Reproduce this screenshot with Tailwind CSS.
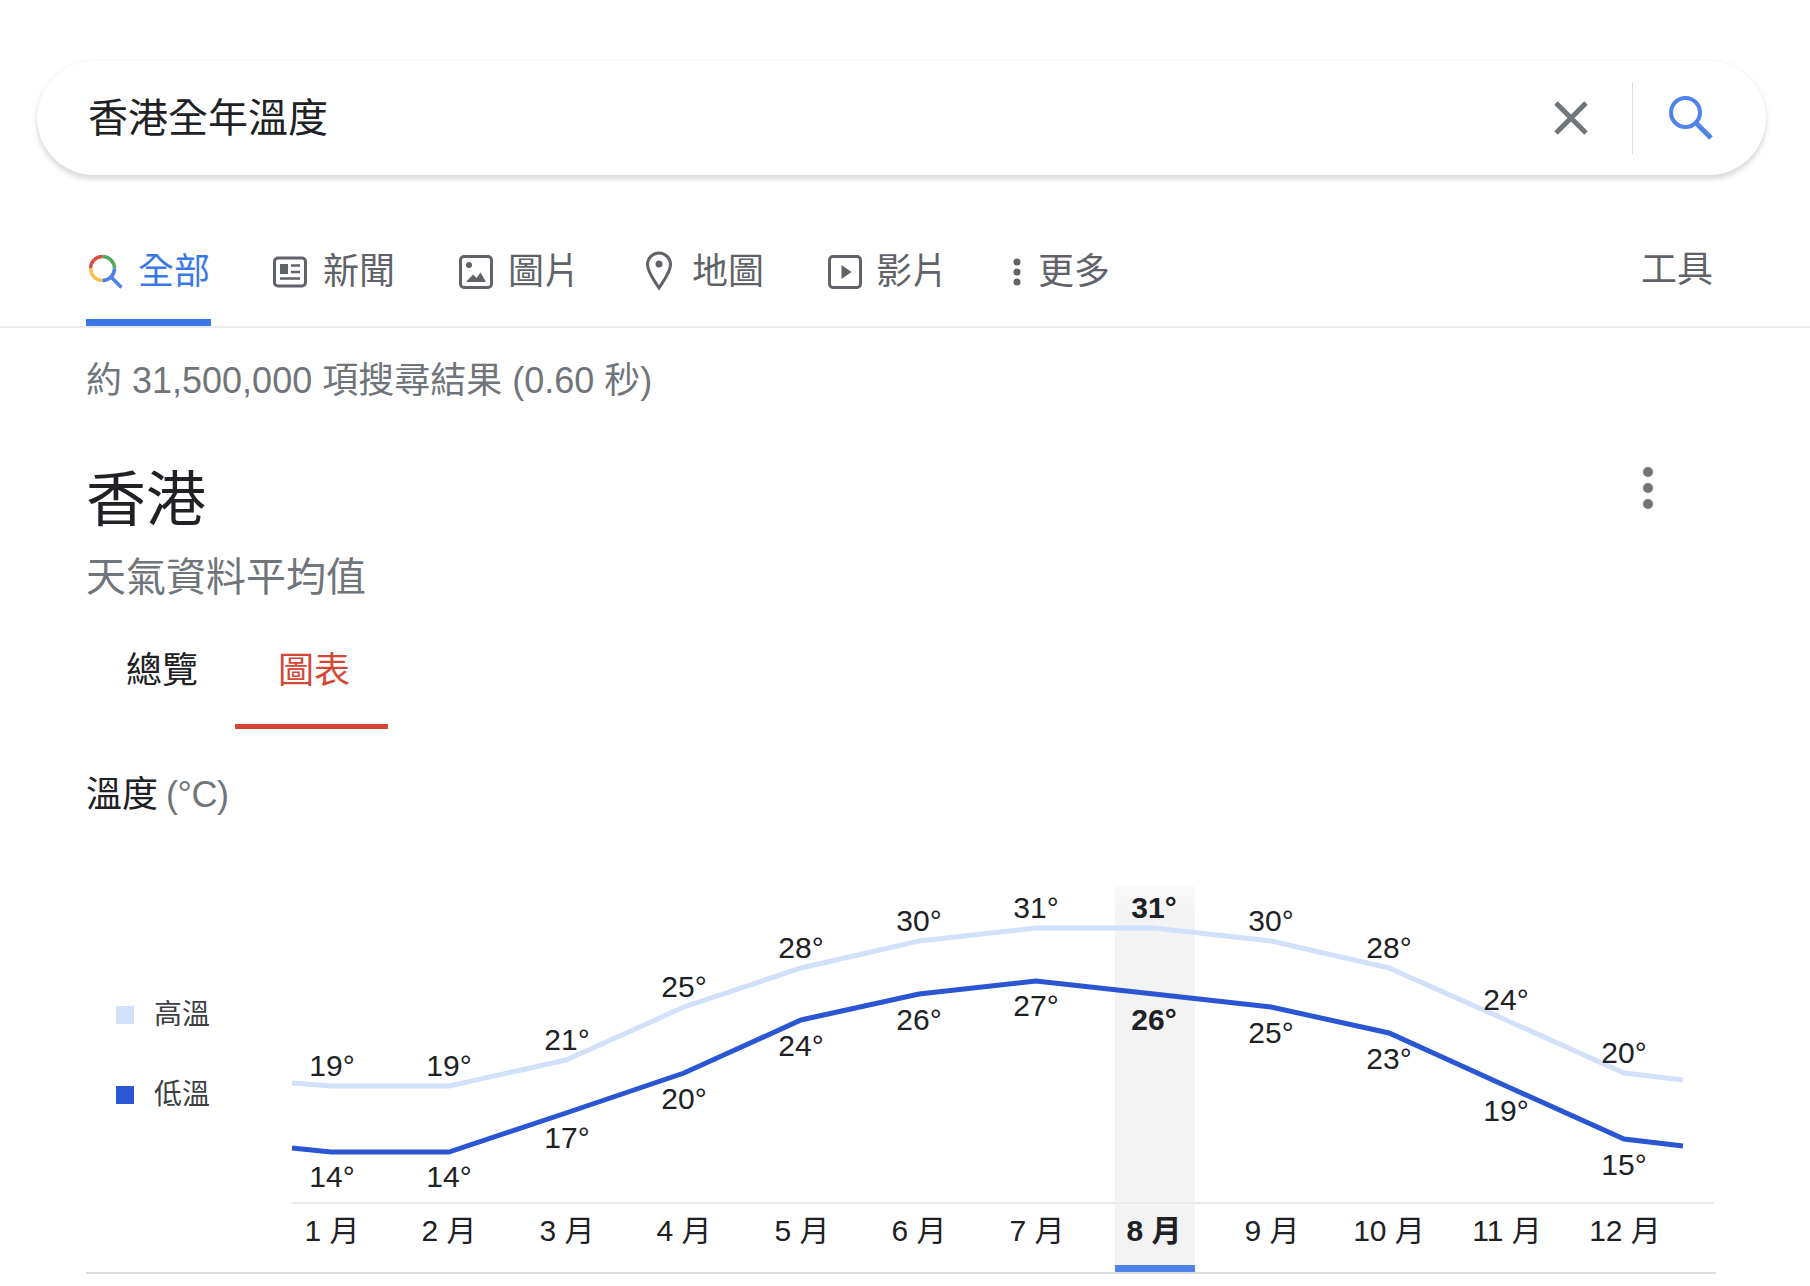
<!DOCTYPE html>
<html lang="zh-Hant"><head><meta charset="utf-8">
<script src="https://cdn.jsdelivr.net/npm/@tailwindcss/browser@4"></script>
</head>
<body class="bg-white font-['Liberation_Sans','Noto_Sans_CJK_TC',sans-serif] overflow-hidden">
<div class="w-[1810px] h-[1286px] overflow-hidden">
  <div class="pt-[61px] pl-[37px] pr-[44px]">
    <div class="h-[114px] rounded-[57px] bg-white shadow-[0_5px_4px_rgba(0,0,0,0.09),0_3px_10px_rgba(0,0,0,0.06),0_0_3px_rgba(0,0,0,0.05)] flex items-center pl-[51px] pr-[53px]">
      <div class="flex-1 text-[40px] leading-[92px] text-[#202124]">香港全年溫度</div>
      <svg class="w-[60px] h-[60px] mr-[31px]" viewBox="0 0 60 60"><path d="M15 15 45 45M45 15 15 45" stroke="#70757a" stroke-width="5" fill="none"/></svg>
      <div class="w-px h-[72px] bg-[#dadce0] mr-[36px]"></div>
      <svg class="w-[44px] h-[44px]" viewBox="0 0 44 44"><circle cx="16.500" cy="16.500" r="14.500" fill="none" stroke="#5083e8" stroke-width="4"/><path d="M27 27 42 42" stroke="#5083e8" stroke-width="5" fill="none"/></svg>
    </div>
  </div>

  <div class="mt-[63px] h-[90px] border-b-2 border-[#e8eaed] flex items-start pl-[86px] pr-[97px] text-[36px] leading-[68px] text-[#5f6368]">
    <div class="relative h-[88px] w-[125px] flex text-[#3b78e7] gap-[17px] pl-[3px]">
      <svg class="w-[34px] h-[36px] mt-[16px] -mr-[2px] shrink-0" viewBox="0 0 34 36" fill="none" stroke-width="3.500"><path d="M1.500 14.500A12 12 0 0 1 13.500 2.500" stroke="#d9503f"/><path d="M13.500 2.500A12 12 0 0 1 25.500 14.500" stroke="#54a85a"/><path d="M1.500 14.500A12 12 0 0 0 13.500 26.500" stroke="#f4c14c"/><path d="M13.500 26.500A12 12 0 0 0 25.500 14.500" stroke="#4c80e6"/><path d="M21.500 22.500 32.500 33.500" stroke="#4c80e6"/></svg>
      <span class="whitespace-nowrap">全部</span>
      <div class="absolute left-0 right-0 bottom-0 h-[7px] bg-[#3b78e7]"></div>
    </div>
    <svg class="w-[34px] h-[32px] mt-[18px] ml-[62px]" viewBox="0 0 34 32" fill="none"><rect x="1.500" y="2" width="31" height="28" rx="3.500" stroke="#5f6368" stroke-width="3"/><rect x="7" y="8" width="8" height="10" fill="#5f6368"/><path d="M18 9.500h9M18 16h9M7 22.500h20" stroke="#5f6368" stroke-width="2.500"/></svg>
    <span class="ml-[16px]">新聞</span>
    <svg class="w-[34px] h-[34px] mt-[17px] ml-[64px]" viewBox="0 0 34 34" fill="none"><rect x="1.500" y="1.500" width="31" height="31" rx="3.500" stroke="#5f6368" stroke-width="3"/><circle cx="10" cy="10" r="3" fill="#5f6368"/><path d="M7 27 14 19.500 17.500 23 21.500 17.500 27 27z" fill="#5f6368"/></svg>
    <span class="ml-[15px]">圖片</span>
    <svg class="w-[28px] h-[40px] mt-[13px] ml-[65px]" viewBox="0 0 28 40" fill="none"><path d="M14 37C9 29 2.500 21 2.500 13.500a11.500 11.500 0 0 1 23 0C25.500 21 19 29 14 37z" stroke="#5f6368" stroke-width="3"/><circle cx="14" cy="13" r="3.500" fill="#5f6368"/></svg>
    <span class="ml-[19px]">地圖</span>
    <svg class="w-[34px] h-[34px] mt-[17px] ml-[64px]" viewBox="0 0 34 34" fill="none"><rect x="1.500" y="1.500" width="31" height="31" rx="3.500" stroke="#5f6368" stroke-width="3"/><path d="M13.500 10 23.500 17 13.500 24z" fill="#5f6368"/></svg>
    <span class="ml-[14px]">影片</span>
    <svg class="w-[10px] h-[30px] mt-[19px] ml-[64px]" viewBox="0 0 10 30"><circle cx="5" cy="5" r="3.500" fill="#5f6368"/><circle cx="5" cy="15" r="3.500" fill="#5f6368"/><circle cx="5" cy="25" r="3.500" fill="#5f6368"/></svg>
    <span class="ml-[16px]">更多</span>
    <span class="ml-auto -mt-[2px]">工具</span>
  </div>

  <div class="pl-[86px] pr-[94px]">
    <div class="mt-[28px] text-[36px] leading-[50px] text-[#70757a]">約 31,500,000 項搜尋結果 (0.60 秒)</div>

    <div class="relative mt-[53px]">
      <div class="text-[60px] leading-[84px] text-[#202124]">香港</div>
      <svg class="absolute right-[62px] top-[7px] w-[12px] h-[44px]" viewBox="0 0 12 44"><circle cx="6" cy="6" r="5" fill="#70757a"/><circle cx="6" cy="22" r="5" fill="#70757a"/><circle cx="6" cy="38" r="5" fill="#70757a"/></svg>
    </div>
    <div class="mt-[6px] text-[40px] leading-[56px] text-[#70757a]">天氣資料平均值</div>

    <div class="mt-[35px] flex text-[36px] leading-[62px]">
      <div class="w-[149px] pl-[40px] h-[89px] text-[#202124]">總覽</div>
      <div class="w-[153px] h-[89px] pl-[43px] border-b-[5px] border-[#d14836] text-[#d14836]">圖表</div>
    </div>

    <div class="mt-[41px] text-[36px] leading-[50px] text-[#70757a]"><span class="text-[#202124]">溫度</span> <span class="-ml-[2px] tracking-[-0.5px]">(°C)</span></div>
  </div>

  <div class="relative mt-[29px] mx-[86px] w-[1630px] h-[425px] border-b-2 border-[#dadce0]">
    <div class="flex items-center absolute left-[30px] top-[146px] gap-[20px] text-[28px] leading-[40px] text-[#3c4043]"><div class="w-[18px] h-[18px] bg-[#d2e0fa]"></div>高溫</div>
    <div class="flex items-center absolute left-[30px] top-[226px] gap-[20px] text-[28px] leading-[40px] text-[#3c4043]"><div class="w-[18px] h-[18px] bg-[#2a56d4]"></div>低溫</div>
    <svg class="absolute left-[-86px] top-[-849px] w-[1810px] h-[1286px] pointer-events-none" viewBox="0 0 1810 1286" font-size="30" fill="#202124" text-anchor="middle">
      <defs><linearGradient id="h" x1="0" y1="0" x2="0" y2="1"><stop offset="0" stop-color="#f3f3f3" stop-opacity="0.4"/><stop offset="0.08" stop-color="#f3f3f3"/><stop offset="1" stop-color="#f3f3f3"/></linearGradient></defs>
      <rect x="1115" y="886" width="80" height="380" fill="url(#h)"/>
      <rect x="1115" y="1265" width="80" height="7" fill="#5083e8"/>
      <path d="M292 1203H1714" stroke="#e8eaed" stroke-width="2"/>
      <polyline fill="none" stroke="#d2e0fa" stroke-width="5" points="292,1083 331,1086 449,1086 566,1060 684,1007 801,968 919,941 1036,928 1154,928 1271,941 1389,968 1506,1020 1624,1073 1683,1080"/>
      <polyline fill="none" stroke="#2a56d4" stroke-width="5" points="292,1148 331,1152 449,1152 566,1113 684,1073 801,1020 919,994 1036,981 1154,994 1271,1007 1389,1033 1506,1086 1624,1139 1683,1146"/>
      <g>
        <text x="332" y="1076">19°</text><text x="449" y="1076">19°</text><text x="567" y="1050">21°</text><text x="684" y="997">25°</text><text x="801" y="958">28°</text><text x="919" y="931">30°</text><text x="1036" y="918">31°</text><text x="1154" y="918" font-weight="700">31°</text><text x="1271" y="931">30°</text><text x="1389" y="958">28°</text><text x="1506" y="1010">24°</text><text x="1624" y="1063">20°</text>
        <text x="332" y="1187">14°</text><text x="449" y="1187">14°</text><text x="567" y="1148">17°</text><text x="684" y="1109">20°</text><text x="801" y="1056">24°</text><text x="919" y="1030">26°</text><text x="1036" y="1016">27°</text><text x="1154" y="1030" font-weight="700">26°</text><text x="1271" y="1043">25°</text><text x="1389" y="1069">23°</text><text x="1506" y="1121">19°</text><text x="1624" y="1175">15°</text>
      </g>
      <g>
        <text x="332" y="1241">1 月</text><text x="449" y="1241">2 月</text><text x="567" y="1241">3 月</text><text x="684" y="1241">4 月</text><text x="802" y="1241">5 月</text><text x="919" y="1241">6 月</text><text x="1037" y="1241">7 月</text><text x="1154" y="1241" font-weight="700">8 月</text><text x="1272" y="1241">9 月</text><text x="1389" y="1241">10 月</text><text x="1507" y="1241">11 月</text><text x="1625" y="1241">12 月</text>
      </g>
    </svg>
  </div>
</div>
</body></html>
